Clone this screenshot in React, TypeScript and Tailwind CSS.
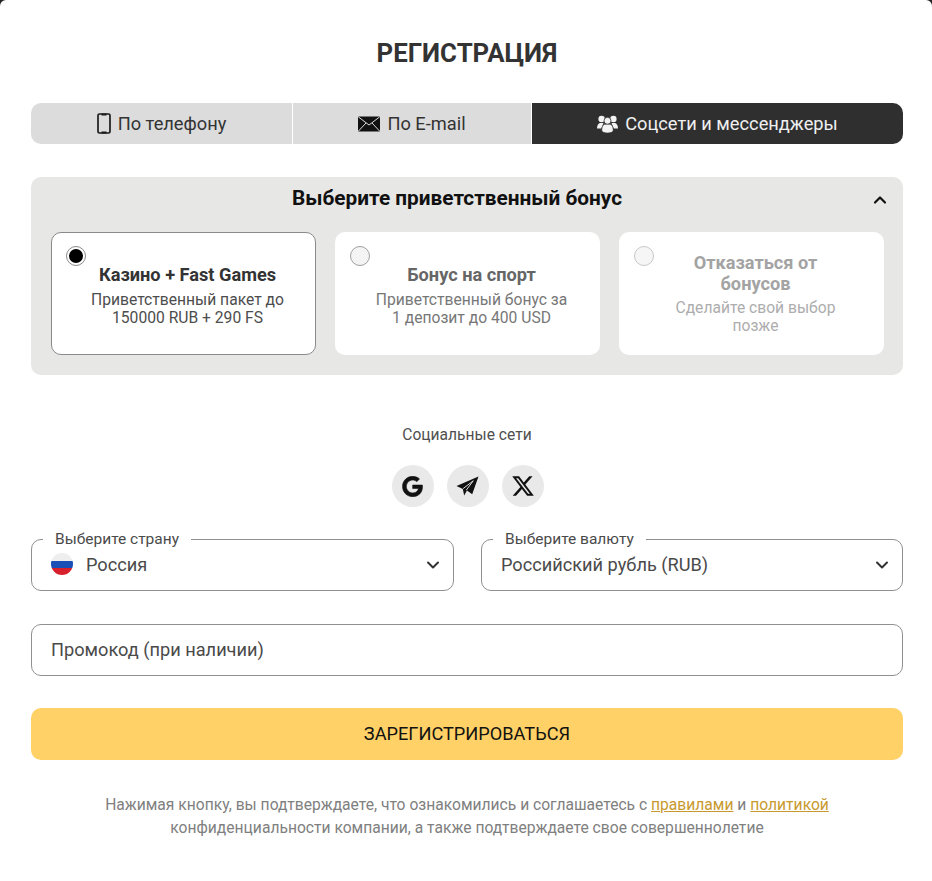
import React from 'react';
import { ChevronDown, ChevronUp } from 'lucide-react';
import { FaGoogle, FaXTwitter } from 'react-icons/fa6';

const PhoneIcon = () => (
  <svg width="14" height="21" viewBox="0 0 14 21" fill="none">
    <rect x="1" y="1" width="12" height="19" rx="1.5" stroke="#1a1a1a" strokeWidth="1.7" />
    <path d="M4.5 1.4h5M4.5 19.6h5" stroke="#1a1a1a" strokeWidth="2" />
  </svg>
);

const MailIcon = () => (
  <svg width="22" height="16" viewBox="0 0 22 16">
    <rect x="0" y="0.5" width="22" height="15" rx="1" fill="#111" />
    <path d="M0.5 1l10.5 8 10.5-8M0.5 15l7.5-8M21.5 15l-7.5-8" stroke="#dcdcdc" strokeWidth="1" fill="none" />
  </svg>
);

const UsersIcon = () => (
  <svg width="21" height="18" viewBox="0 0 21 18" fill="#f2f2f2">
    <circle cx="4.6" cy="4" r="3.2" />
    <circle cx="16.4" cy="4" r="3.2" />
    <path d="M0 13.5c0-3.6 1.6-5.5 3.5-5.5h3L4.2 13.5z" />
    <path d="M21 13.5c0-3.6-1.6-5.5-3.5-5.5h-3l2.3 5.5z" />
    <circle cx="10.5" cy="5.8" r="3.5" stroke="#2f2f2f" strokeWidth="0.8" />
    <path d="M4.8 15.5c0-4.5 1.8-6.2 3.5-6.2h4.4c1.7 0 3.500 1.7 3.500 6.2 0 1.5-2.500 2.500-5.700 2.500s-5.700-1-5.700-2.500z" stroke="#2f2f2f" strokeWidth="0.6" />
  </svg>
);

const PlaneIcon = () => (
  <svg width="23" height="20" viewBox="0 0 22 19">
    <path d="M0.5 9.5L21.5 0.5L15.5 17.5L10.5 13.8L7.8 18.5L6.5 12.3z" fill="#111" />
    <path d="M6.8 12L16.5 4.5L9.8 13.5" stroke="#e9e9e9" strokeWidth="0.9" fill="none" />
  </svg>
);

const Tab = ({ icon, label, className }: { icon: React.ReactNode; label: string; className: string }) => (
  <button className={`flex h-[41px] items-center justify-center gap-[7px] text-[18.25px] ${className}`}>
    {icon}
    <span>{label}</span>
  </button>
);

const BonusCard = ({ title, text, active, faded }: { title: string; text: string[]; active?: boolean; faded?: boolean }) => (
  <div className={`relative flex h-[123px] flex-col items-center rounded-[10px] bg-white pl-[46px] pr-[38px] text-center ${active ? 'border border-[#8a8a8a] pt-[31px]' : faded ? 'pt-[20px]' : 'pt-[32px]'}`}>
    <span className={`absolute flex h-[20px] w-[20px] items-center justify-center rounded-full border ${active ? 'left-[14px] top-[13px] border-[#8a8a8a] bg-white' : faded ? 'left-[15px] top-[14px] border-[#c9c9c9] bg-[#f6f6f6]' : 'left-[15px] top-[14px] border-[#a0a0a0] bg-[#f4f4f4]'}`}>
      {active && <span className="h-[14px] w-[14px] rounded-full bg-black" />}
    </span>
    <div className={`text-[18.2px] font-bold leading-[21px] ${active ? 'text-[#333333]' : faded ? 'text-[#a3a3a3]' : 'text-[#666666]'}`}>{title}</div>
    <div className={`${faded ? 'mt-[5px]' : 'mt-[6px]'} text-[15.65px] leading-[18px] ${active ? 'text-[#4d4d4d]' : faded ? 'text-[#adadad]' : 'text-[#777777]'}`}>
      {text.map(t => <div key={t} className="whitespace-nowrap">{t}</div>)}
    </div>
  </div>
);

const SelectField = ({ label, value, flag }: { label: string; value: string; flag?: boolean }) => (
  <fieldset className="flex h-[60px] items-center justify-between rounded-[10px] border border-[#909090] pl-[19px] pr-[10px]">
    <legend className="-ml-[8px] px-[12px] text-[15.5px] leading-[17px] text-[#4a4a4a]">{label}</legend>
    <div className="-mt-[9px] flex items-center gap-[13px] text-[18.2px] text-[#4a4a4a]">
      {flag && (
        <span className="flex h-[22px] w-[22px] flex-col overflow-hidden rounded-full">
          <span className="h-1/3 bg-[#eeeeee]" />
          <span className="h-1/3 bg-[#1b4fb8]" />
          <span className="h-1/3 bg-[#d8202c]" />
        </span>
      )}
      <span>{value}</span>
    </div>
    <ChevronDown className="-mt-[9px] h-[20px] w-[20px] text-[#333333]" strokeWidth={2.4} />
  </fieldset>
);

const SocialButton = ({ children }: { children: React.ReactNode }) => (
  <button className="flex h-[42px] w-[42px] items-center justify-center rounded-full bg-[#e9e9e9] text-[#111111]">
    {children}
  </button>
);

const App: React.FC = () => {
  return (
    <div className="min-h-[881px] bg-[#222222] font-['Roboto',sans-serif]">
      <div className="min-h-[881px] rounded-t-[6px] bg-white pl-[31px] pr-[29px] pt-[38px]">
        <h1 className="text-center text-[25.8px] font-bold leading-[30px] text-[#333333]">РЕГИСТРАЦИЯ</h1>

        {/* Tabs */}
        <div className="mt-[35px] grid grid-cols-[261px_238px_1fr] gap-[1px] overflow-hidden rounded-[10px]">
          <Tab icon={<PhoneIcon />} label="По телефону" className="bg-[#dcdcdc] text-[#333333]" />
          <Tab icon={<MailIcon />} label="По E-mail" className="bg-[#dcdcdc] text-[#333333]" />
          <Tab icon={<UsersIcon />} label="Соцсети и мессенджеры" className="bg-[#2f2f2f] text-[#f0f0f0]" />
        </div>

        {/* Bonus */}
        <section className="relative mt-[33px] h-[198px] rounded-[10px] bg-[#e7e7e6] pl-[20px] pr-[19px] pt-[8px]">
          <h2 className="pr-[21px] text-center text-[20.8px] font-bold leading-[26px] text-[#111111]">Выберите приветственный бонус</h2>
          <ChevronUp className="absolute right-[13px] top-[13px] h-[20px] w-[20px] text-[#111111]" strokeWidth={2.6} />
          <div className="mt-[21px] grid grid-cols-3 gap-[19px]">
            <BonusCard active title="Казино + Fast Games" text={['Приветственный пакет до', '150000 RUB + 290 FS']} />
            <BonusCard title="Бонус на спорт" text={['Приветственный бонус за', '1 депозит до 400 USD']} />
            <BonusCard faded title="Отказаться от бонусов" text={['Сделайте свой выбор', 'позже']} />
          </div>
        </section>

        {/* Socials */}
        <div className="mt-[50px] text-center text-[15.6px] leading-[20px] text-[#4f4f4f]">Социальные сети</div>
        <div className="ml-[1px] mt-[20px] flex justify-center gap-[13px]">
          <SocialButton><FaGoogle className="h-[21px] w-[21px]" stroke="currentColor" strokeWidth={14} /></SocialButton>
          <SocialButton><PlaneIcon /></SocialButton>
          <SocialButton><FaXTwitter className="h-[24px] w-[24px]" /></SocialButton>
        </div>

        {/* Form */}
        <div className="mt-[24px] grid grid-cols-[423px_1fr] gap-[27px]">
          <SelectField label="Выберите страну" value="Россия" flag />
          <SelectField label="Выберите валюту" value="Российский рубль (RUB)" />
        </div>
        <div className="mt-[33px] flex h-[52px] items-center rounded-[10px] border border-[#909090] px-[19px] text-[18.2px] text-[#4a4a4a]">
          Промокод (при наличии)
        </div>
        <button className="mt-[32px] h-[52px] w-full rounded-[10px] bg-[#ffd166] text-[18.2px] text-[#111111]">ЗАРЕГИСТРИРОВАТЬСЯ</button>

        <p className="mt-[33px] text-center text-[15.63px] leading-[23px] text-[#808080]">
          Нажимая кнопку, вы подтверждаете, что ознакомились и соглашаетесь с{' '}
          <a className="text-[#c8992e] underline">правилами</a> и <a className="text-[#c8992e] underline">политикой</a>
          <br />
          конфиденциальности компании, а также подтверждаете свое совершеннолетие
        </p>
      </div>
    </div>
  );
};

export default App;
